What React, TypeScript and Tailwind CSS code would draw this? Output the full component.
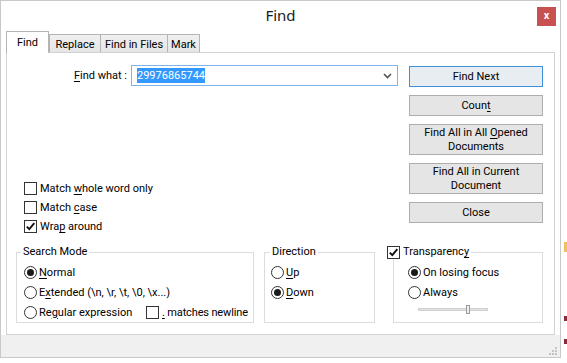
import React from "react";

const Check = () => (
  <svg width="11" height="11" viewBox="0 0 11 11">
    <path d="M1.8 5.6 L4.3 8.2 L9.3 2.2" fill="none" stroke="#111" strokeWidth="1.9" />
  </svg>
);

function Checkbox({ checked = false }: { checked?: boolean }) {
  return (
    <div className="w-[13px] h-[13px] shrink-0 border border-[#333] bg-white flex items-center justify-center">
      {checked && <Check />}
    </div>
  );
}

function Radio({ checked = false }: { checked?: boolean }) {
  return (
    <div className="w-[13px] h-[13px] shrink-0 rounded-full border border-[#333] bg-white flex items-center justify-center">
      {checked && <div className="w-[7px] h-[7px] rounded-full bg-[#1a1a1a]" />}
    </div>
  );
}

function U({ children }: { children: React.ReactNode }) {
  return <span className="underline underline-offset-[2px] decoration-1">{children}</span>;
}

function Btn({ h, primary = false, children }: { h: string; primary?: boolean; children: React.ReactNode }) {
  return (
    <div
      className={
        "w-[134px] flex items-center justify-center text-center leading-[14px] pt-[1px] border " +
        h +
        (primary ? " border-[#3c8fd8] bg-[#e8edf2]" : " border-[#adadad] bg-[#e5e5e5]")
      }
    >
      <div>{children}</div>
    </div>
  );
}

function Group({
  w,
  legend,
  legendLeft,
  children,
}: {
  w: string;
  legend: React.ReactNode;
  legendLeft: string;
  children: React.ReactNode;
}) {
  return (
    <div className={"relative pt-[8px] " + w}>
      <div className="h-[71px] border border-[#dcdcdc]">{children}</div>
      <div className={"absolute top-0 h-[16px] leading-[16px] bg-white px-[2px] flex items-center " + legendLeft}>
        {legend}
      </div>
    </div>
  );
}

export default function App() {
  return (
    <div className="w-[567px] h-[363px] bg-white flex font-['Roboto','Noto_Sans',sans-serif] text-[11px] text-black overflow-hidden whitespace-nowrap">
      {/* window */}
      <div className="w-[561px] h-[358px] border border-[#c9c9c9] bg-white flex flex-col shrink-0">
        {/* title bar */}
        <div className="h-[30px] flex items-start shrink-0">
          <div className="flex-1 text-center text-[15px] leading-[18px] mt-[5px] pl-[23px] text-[#1a1a1a] font-['Noto_Sans',sans-serif]">
            Find
          </div>
          <div className="w-[19px] h-[19px] mt-[6px] mr-[4px] bg-[#c75050] flex items-center justify-center text-white text-[11px] font-bold leading-none pb-[2px]">
            x
          </div>
        </div>
        {/* tabs */}
        <div className="h-[22px] flex items-end pl-[5px] shrink-0 -mb-px">
          <div className="relative z-10 w-[43px] h-[22px] bg-white border border-b-0 border-[#b4b4b4] flex items-start justify-center pt-[3px] leading-[15px]">
            Find
          </div>
          <div className="w-[52px] h-[19px] border-t border-r border-l border-[#b4b4b4] bg-gradient-to-b from-[#f0f0f0] to-[#e5e5e5] flex items-start justify-center pt-[2px] leading-[15px]">
            Replace
          </div>
          <div className="w-[67px] h-[19px] border-t border-r border-[#b4b4b4] bg-gradient-to-b from-[#f0f0f0] to-[#e5e5e5] flex items-start justify-center pt-[2px] leading-[15px]">
            Find in Files
          </div>
          <div className="w-[32px] h-[19px] border-t border-r border-[#b4b4b4] bg-gradient-to-b from-[#f0f0f0] to-[#e5e5e5] flex items-start justify-center pt-[2px] leading-[15px]">
            Mark
          </div>
        </div>
        {/* pane */}
        <div className="relative ml-[5px] w-[549px] h-[283px] border border-[#d2d2d2] bg-white shrink-0 flex flex-col">
          <div className="flex pt-[12px]">
            <div className="w-[402px] flex flex-col">
              <div className="flex items-center h-[21px]">
                <div className="w-[120px] text-right leading-[15px]">
                  <U>F</U>ind what :
                </div>
                <div className="ml-[4px] w-[267px] h-[21px] border border-[#7eb4ea] bg-white flex items-center">
                  <span className="ml-[5px] bg-[#3399ff] text-white leading-[15px]">29976865744</span>
                  <div className="flex-1" />
                  <svg width="9" height="6" viewBox="0 0 9 6" className="mr-[5px]">
                    <path d="M1 1 L4.5 4.5 L8 1" fill="none" stroke="#555" strokeWidth="1.6" />
                  </svg>
                </div>
              </div>
              <div className="mt-[93px] pl-[17px] flex flex-col">
                <div className="h-[19px] flex items-center gap-[3px]">
                  <Checkbox />
                  <span className="leading-[15px]">
                    Match <U>w</U>hole word only
                  </span>
                </div>
                <div className="h-[19px] flex items-center gap-[3px]">
                  <Checkbox />
                  <span className="leading-[15px]">
                    Match <U>c</U>ase
                  </span>
                </div>
                <div className="h-[19px] flex items-center gap-[3px]">
                  <Checkbox checked />
                  <span className="leading-[15px]">
                    Wra<U>p</U> around
                  </span>
                </div>
              </div>
            </div>
            <div className="mt-[1px] flex flex-col gap-[8px]">
              <Btn h="h-[21px]" primary>
                Find Next
              </Btn>
              <Btn h="h-[21px]">
                Coun<U>t</U>
              </Btn>
              <Btn h="h-[31px]">
                Find All in All <U>O</U>pened
                <br />
                Documents
              </Btn>
              <Btn h="h-[31px]">
                Find All in Current
                <br />
                Document
              </Btn>
              <Btn h="h-[21px]">Close</Btn>
            </div>
          </div>
          {/* groups */}
          <div className="flex pl-[9px] mt-[8px]">
            <Group w="w-[238px]" legendLeft="left-[5px]" legend={<span>Search Mode</span>}>
              <div className="pt-[9px] pl-[7px] flex flex-col">
                <div className="h-[20px] flex items-center gap-[2px]">
                  <Radio checked />
                  <span className="leading-[15px]">
                    <U>N</U>ormal
                  </span>
                </div>
                <div className="h-[20px] flex items-center gap-[2px]">
                  <Radio />
                  <span className="leading-[15px]">
                    E<U>x</U>tended (\n, \r, \t, \0, \x...)
                  </span>
                </div>
                <div className="h-[20px] flex items-center gap-[2px]">
                  <Radio />
                  <span className="leading-[15px] w-[105px]">
                    Re<U>g</U>ular expression
                  </span>
                  <Checkbox />
                  <span className="leading-[15px] ml-[1px] tracking-[-0.15px]">
                    <U>.</U> matches newline
                  </span>
                </div>
              </div>
            </Group>
            <Group w="w-[111px] ml-[10px]" legendLeft="left-[6px]" legend={<span>Direction</span>}>
              <div className="pt-[9px] pl-[6px] flex flex-col">
                <div className="h-[20px] flex items-center gap-[2px]">
                  <Radio />
                  <span className="leading-[15px]">
                    <U>U</U>p
                  </span>
                </div>
                <div className="h-[20px] flex items-center gap-[2px]">
                  <Radio checked />
                  <span className="leading-[15px]">
                    <U>D</U>own
                  </span>
                </div>
              </div>
            </Group>
            <Group
              w="w-[150px] ml-[18px]"
              legendLeft="left-[-6px] gap-[3px] !pl-0"
              legend={
                <>
                  <Checkbox checked />
                  <span>
                    Transparenc<U>y</U>
                  </span>
                </>
              }
            >
              <div className="pt-[9px] pl-[14px] flex flex-col">
                <div className="h-[20px] flex items-center gap-[2px]">
                  <Radio checked />
                  <span className="leading-[15px]">On losing focus</span>
                </div>
                <div className="h-[20px] flex items-center gap-[2px]">
                  <Radio />
                  <span className="leading-[15px]">Always</span>
                </div>
                <div className="h-[14px] flex items-center pl-[10px]">
                  <div className="relative w-[70px] h-[3px] bg-[#e3e3e3] border border-[#d0d0d0]">
                    <div className="absolute left-[47px] top-[-4px] w-[4px] h-[9px] bg-[#f0f0f0] border border-[#9a9a9a]" />
                  </div>
                </div>
              </div>
            </Group>
          </div>
        </div>
        {/* bottom band */}
        <div className="flex-1 bg-[#f0f0f0] flex items-end justify-end pr-[3px] pb-[2px]">
          <svg width="8" height="8" viewBox="0 0 8 8">
            <rect x="6" y="0" width="2" height="2" fill="#c4c4c4" />
            <rect x="3" y="3" width="2" height="2" fill="#c4c4c4" />
            <rect x="6" y="3" width="2" height="2" fill="#c4c4c4" />
            <rect x="0" y="6" width="2" height="2" fill="#c4c4c4" />
            <rect x="3" y="6" width="2" height="2" fill="#c4c4c4" />
            <rect x="6" y="6" width="2" height="2" fill="#c4c4c4" />
          </svg>
        </div>
      </div>
      {/* editor behind */}
      <div className="flex-1 flex flex-col pl-[3px]">
        <div className="mt-[242px] w-[3px] h-[10px] bg-[#f0c060]" />
        <div className="mt-[64px] w-[3px] h-[5px] bg-[#8a2a3a]" />
        <div className="mt-[18px] w-[3px] h-[5px] bg-[#8a2a3a]" />
      </div>
    </div>
  );
}
